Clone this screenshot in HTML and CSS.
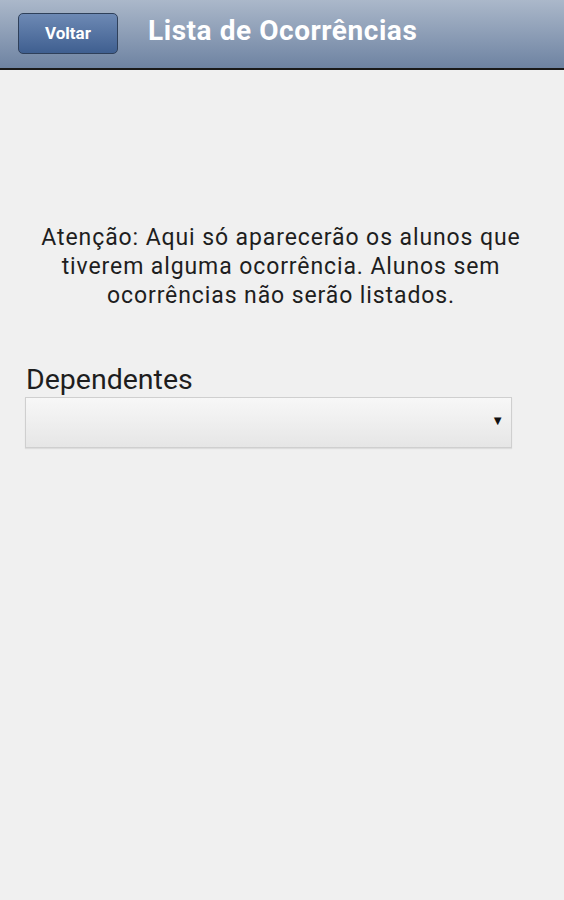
FILE: index.html
```html
<html>
    <head>
        <link rel="stylesheet" href="styles.css">
    </head>
    <body>
        <div id="header">
            <button id="voltarbtn">Voltar</button>
            <div id="title">Lista de Ocorrências</div>
        </div>
        <div id="Body">
            <p id="aviso">Atenção: Aqui só aparecerão os alunos que tiverem alguma ocorrência. Alunos sem ocorrências não serão listados.</p>
            <label id="deplabel" for="dependentes">Dependentes</label>
            <div id="selectbox">
                <select id="dependentes"></select>
                <span id="arrow">&#9660;</span>
            </div>
        </div>
    </body>
</html>
```
FILE: styles.css
```css
*{
    padding:0;
    margin:0;
    box-sizing:border-box;
}
body{
    background-color:#f0f0f0;
    font-family:Roboto, "Liberation Sans", sans-serif;
    color:#1e1e1e;
}
#header{
    display:flex;
    align-items:center;
    height:70px;
    padding:0 0 2px 18px;
    background:linear-gradient(#abb8ca, #6e83a2);
    border-bottom:2px solid #1a1a1a;
}
#voltarbtn{
    width:100px;
    height:41px;
    border:1px solid #2f405a;
    border-radius:5px;
    background:linear-gradient(#6d89b4, #3f5f90);
    color:white;
    font-family:Roboto, "Liberation Sans", sans-serif;
    font-weight:bold;
    font-size:17px;
}
#title{
    margin-left:30px;
    color:white;
    font-weight:bold;
    font-size:28px;
    letter-spacing:0.55px;
    margin-bottom:6px;
}
#Body{
    display:flex;
    flex-direction:column;
    padding:153px 25px 0 25px;
}
#aviso{
    font-size:23px;
    line-height:29px;
    letter-spacing:0.9px;
    text-align:center;
    padding:0 2px 0 0;
}
#deplabel{
    margin-top:53px;
    font-size:28.5px;
    line-height:34px;
    padding-left:1px;
}
#selectbox{
    position:relative;
    width:487px;
    height:51px;
}
#dependentes{
    width:100%;
    height:100%;
    appearance:none;
    border:1px solid #cfcfcf;
    border-radius:0;
    background:linear-gradient(#f7f7f7, #e6e6e6);
    box-shadow:0 1px 1px rgba(0,0,0,0.08);
}
#arrow{
    position:absolute;
    right:8px;
    top:16px;
    font-size:13px;
    color:#111;
}
```
